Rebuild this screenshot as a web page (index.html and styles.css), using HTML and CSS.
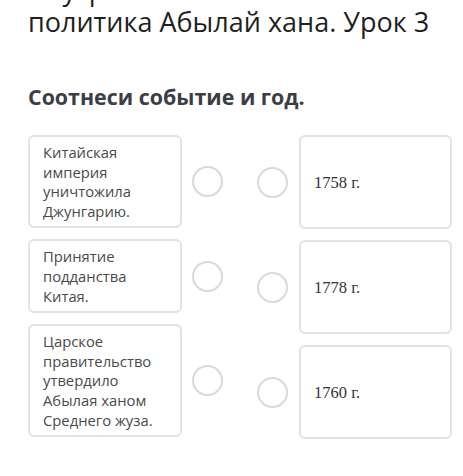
FILE: index.html
```html
<!DOCTYPE html>
<html lang="ru">
<head>
<meta charset="utf-8">
<title>Урок 3</title>
<link rel="stylesheet" href="styles.css">
</head>
<body>
<div class="page">
  <h1 class="title">Внутренняя и внешняя политика Абылай хана. Урок 3</h1>
  <h2 class="task">Соотнеси событие и год.</h2>
  <div class="match">
    <div class="col col-left">
      <div class="item">
        <div class="card card-text">Китайская империя уничтожила Джунгарию.</div>
        <span class="dot"></span>
      </div>
      <div class="item">
        <div class="card card-text">Принятие подданства Китая.</div>
        <span class="dot"></span>
      </div>
      <div class="item">
        <div class="card card-text">Царское правительство утвердило Абылая ханом Среднего жуза.</div>
        <span class="dot"></span>
      </div>
    </div>
    <div class="col col-right">
      <div class="item">
        <span class="dot"></span>
        <div class="card card-year">1758 г.</div>
      </div>
      <div class="item">
        <span class="dot"></span>
        <div class="card card-year">1778 г.</div>
      </div>
      <div class="item">
        <span class="dot"></span>
        <div class="card card-year">1760 г.</div>
      </div>
    </div>
  </div>
</div>
</body>
</html>
```

FILE: styles.css
```css
html, body {
  margin: 0;
  padding: 0;
  background: #ffffff;
}

body {
  font-family: "Open Sans", "Liberation Sans", sans-serif;
  color: #222;
  overflow: hidden;
}

.page {
  padding: 0 11px 0 28px;
}

.title {
  margin: -26px 0 0 0;
  font-size: 27px;
  font-weight: 400;
  line-height: 32px;
  color: #1f1f1f;
  width: 420px;
}

.task {
  margin: 45px 0 0 0;
  font-size: 21.4px;
  font-weight: 700;
  line-height: 28px;
  color: #3b3e44;
}

.match {
  display: flex;
  gap: 34px;
  margin-top: 24px;
}

.col {
  display: flex;
  flex-direction: column;
  gap: 11px;
  width: 195px;
}

.item {
  display: flex;
  align-items: center;
  gap: 10px;
}

.col-right .item {
  gap: 11px;
}

.card {
  box-sizing: border-box;
  width: 154px;
  border: 2px solid #e0e2e6;
  border-radius: 6px;
  background: #fff;
}

.card-text {
  padding: 6px 12px 5px 13px;
  font-size: 14.8px;
  line-height: 19.6px;
  color: #4a4a4a;
}

.card-year {
  min-height: 94px;
  display: flex;
  align-items: center;
  padding: 2px 13px 0 13px;
  font-family: "Liberation Serif", "Times New Roman", serif;
  font-size: 16.5px;
  color: #333;
}

.dot {
  flex: none;
  box-sizing: border-box;
  width: 31px;
  height: 31px;
  border: 2px solid #d6d9de;
  border-radius: 50%;
}
```
